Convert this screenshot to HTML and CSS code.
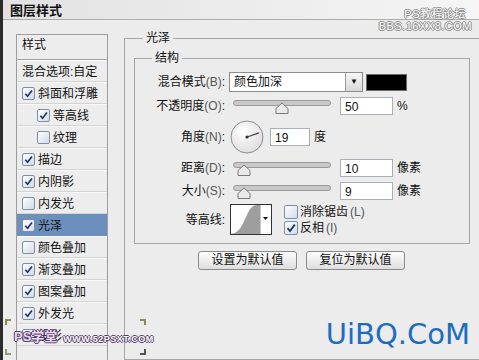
FILE: index.html
```html
<!DOCTYPE html>
<html lang="zh-CN">
<head>
    <meta charset="UTF-8">
    <title>图层样式</title>
    <link rel="stylesheet" href="styles.css">
</head>
<body>
<div class="window">
    <div class="edge"></div>
    <div class="dialog">
        <div class="titlebar">图层样式</div>
        <div class="content">
            <!--左侧样式列表-->
            <div class="styles">
                <div class="styles-head">样式</div>
                <div class="styles-blend">混合选项:自定</div>
                <div class="item"><span class="cb on"><svg viewBox="0 0 12 12"><path d="M2.5 6.2 L5 9 L9.8 2.6" /></svg></span>斜面和浮雕</div>
                <div class="item sub"><span class="cb on"><svg viewBox="0 0 12 12"><path d="M2.5 6.2 L5 9 L9.8 2.6" /></svg></span>等高线</div>
                <div class="item sub"><span class="cb"></span>纹理</div>
                <div class="item"><span class="cb on"><svg viewBox="0 0 12 12"><path d="M2.5 6.2 L5 9 L9.8 2.6" /></svg></span>描边</div>
                <div class="item"><span class="cb on"><svg viewBox="0 0 12 12"><path d="M2.5 6.2 L5 9 L9.8 2.6" /></svg></span>内阴影</div>
                <div class="item"><span class="cb"></span>内发光</div>
                <div class="item current"><span class="cb on"><svg viewBox="0 0 12 12"><path d="M2.5 6.2 L5 9 L9.8 2.6" /></svg></span>光泽</div>
                <div class="item"><span class="cb"></span>颜色叠加</div>
                <div class="item"><span class="cb on"><svg viewBox="0 0 12 12"><path d="M2.5 6.2 L5 9 L9.8 2.6" /></svg></span>渐变叠加</div>
                <div class="item"><span class="cb on"><svg viewBox="0 0 12 12"><path d="M2.5 6.2 L5 9 L9.8 2.6" /></svg></span>图案叠加</div>
                <div class="item"><span class="cb on"><svg viewBox="0 0 12 12"><path d="M2.5 6.2 L5 9 L9.8 2.6" /></svg></span>外发光</div>
                <div class="item"><span class="cb on"><svg viewBox="0 0 12 12"><path d="M2.5 6.2 L5 9 L9.8 2.6" /></svg></span>投影</div>
            </div>

            <!--右侧设置-->
            <div class="main">
                <fieldset class="group outer">
                    <legend>光泽</legend>
                    <fieldset class="group inner">
                        <legend>结构</legend>
                        <div class="form">
                            <div class="label">混合模式<span class="key">(B)</span>:</div>
                            <div class="ctrl">
                                <div class="select"><span class="value">颜色加深</span><span class="arrow">&#9660;</span></div>
                                <div class="swatch"></div>
                            </div>

                            <div class="label">不透明度<span class="key">(O)</span>:</div>
                            <div class="ctrl">
                                <svg class="slider" width="98" height="20" viewBox="0 0 98 20">
                                    <rect x="0.5" y="4.5" width="97" height="5" rx="2.5" fill="#c9c9c9" stroke="#9a9a9a"/>
                                    <path d="M49 7 L55 12.5 L55 17.5 L43 17.5 L43 12.5 Z" fill="#e9e9e9" stroke="#7a7a7a"/>
                                </svg>
                                <div class="field">50</div>
                                <span class="unit">%</span>
                            </div>

                            <div class="label">角度<span class="key">(N)</span>:</div>
                            <div class="ctrl">
                                <svg class="dial" width="34" height="34" viewBox="0 0 34 34">
                                    <defs>
                                        <radialGradient id="dialbg" cx="0.4" cy="0.35" r="0.7">
                                            <stop offset="0" stop-color="#ffffff"/>
                                            <stop offset="1" stop-color="#dcdcdc"/>
                                        </radialGradient>
                                    </defs>
                                    <circle cx="17" cy="17" r="16" fill="url(#dialbg)" stroke="#8c8c8c"/>
                                    <line x1="17" y1="17" x2="29" y2="12.9" stroke="#444" stroke-width="1.2"/>
                                    <circle cx="17" cy="17" r="1.6" fill="#333"/>
                                </svg>
                                <div class="field short">19</div>
                                <span class="unit">度</span>
                            </div>

                            <div class="label">距离<span class="key">(D)</span>:</div>
                            <div class="ctrl">
                                <svg class="slider" width="98" height="20" viewBox="0 0 98 20">
                                    <rect x="0.5" y="4.5" width="97" height="5" rx="2.5" fill="#c9c9c9" stroke="#9a9a9a"/>
                                    <path d="M11 7 L17 12.5 L17 17.5 L5 17.5 L5 12.5 Z" fill="#e9e9e9" stroke="#7a7a7a"/>
                                </svg>
                                <div class="field">10</div>
                                <span class="unit">像素</span>
                            </div>

                            <div class="label">大小<span class="key">(S)</span>:</div>
                            <div class="ctrl">
                                <svg class="slider" width="98" height="20" viewBox="0 0 98 20">
                                    <rect x="0.5" y="4.5" width="97" height="5" rx="2.5" fill="#c9c9c9" stroke="#9a9a9a"/>
                                    <path d="M11 7 L17 12.5 L17 17.5 L5 17.5 L5 12.5 Z" fill="#e9e9e9" stroke="#7a7a7a"/>
                                </svg>
                                <div class="field">9</div>
                                <span class="unit">像素</span>
                            </div>

                            <div class="label">等高线:</div>
                            <div class="ctrl">
                                <svg class="contour" width="42" height="31" viewBox="0 0 42 31">
                                    <rect x="0.5" y="0.5" width="41" height="30" fill="#fff" stroke="#333"/>
                                    <path d="M1 30 C 10 29 13 19 17 11 C 20 4 23 1 27 1 L 30 1 L 30 30 Z" fill="#9e9e9e"/>
                                    <line x1="30.5" y1="1" x2="30.5" y2="30" stroke="#c8c8c8"/>
                                    <path d="M33 13 L38 13 L35.5 16 Z" fill="#111"/>
                                </svg>
                                <div class="checks">
                                    <label class="check"><span class="cb big"></span>消除锯齿<span class="key">(L)</span></label>
                                    <label class="check"><span class="cb big on"><svg viewBox="0 0 12 12"><path d="M2.5 6.2 L5 9 L9.8 2.6" /></svg></span>反相<span class="key">(I)</span></label>
                                </div>
                            </div>
                        </div>
                    </fieldset>
                    <div class="buttons">
                        <div class="btn">设置为默认值</div>
                        <div class="btn">复位为默认值</div>
                    </div>
                </fieldset>
            </div>
        </div>
    </div>

    <!--水印-->
    <div class="mark-top">
        <div>PS教程论坛</div>
        <div>BBS.16XX8.COM</div>
    </div>
    <div class="mark-left">
        <span class="corner tl"></span><span class="corner tr"></span>
        <span class="corner bl"></span><span class="corner br"></span>
        <span class="mark-name">PS学堂</span><span class="mark-url">WWW.52PSXT.COM</span>
    </div>
    <div class="mark-blue">UiBQ.CoM</div>
</div>
</body>
</html>
```

FILE: styles.css
```css
* {
    padding: 0;
    margin: 0;
    box-sizing: border-box;
}

body {
    width: 479px;
    height: 360px;
    overflow: hidden;
    background: #ececec;
    font-family: "Liberation Sans", "Noto Sans CJK SC", sans-serif;
    font-size: 12px;
    line-height: 16px;
    color: #111;
}

.window {
    position: relative;
    width: 479px;
    height: 360px;
    display: flex;
    overflow: hidden;
}

.edge {
    width: 3px;
    background: #2b2b2b;
    flex-shrink: 0;
}

.dialog {
    flex: 1;
    display: flex;
    flex-direction: column;
}

.titlebar {
    height: 23px;
    padding: 3px 0 0 7px;
    font-size: 13px;
    font-weight: bold;
    background: linear-gradient(to right, #e2e2e2, #f6f6f6);
    border-bottom: 1px solid #acacac;
}

.content {
    display: flex;
    align-items: flex-start;
}

/* 样式列表 */
.styles {
    width: 92px;
    height: 340px;
    margin: 14px 0 0 13px;
    border: 1px solid #9c9c9c;
    background: #ededed;
}

.styles-head {
    height: 25px;
    padding: 2px 0 0 5px;
    border-bottom: 1px solid #a4a4a4;
}

.styles-blend {
    height: 22px;
    padding: 3px 0 0 5px;
    border-top: 1px solid #fafafa;
    border-bottom: 1px solid #d4d4d4;
}

.item {
    height: 22px;
    display: flex;
    align-items: center;
    gap: 3px;
    padding: 1px 0 0 5px;
    border-bottom: 1px solid #d4d4d4;
    border-top: 1px solid #f8f8f8;
}

.item.sub {
    padding-left: 20px;
}

.item.current {
    background: #6d8fbd;
    border-color: #6d8fbd;
}

.cb {
    width: 13px;
    height: 13px;
    flex-shrink: 0;
    border: 1px solid #7d8ea8;
    border-radius: 2px;
    background: linear-gradient(135deg, #ffffff, #d2dbe8);
    display: inline-flex;
}

.cb svg {
    width: 11px;
    height: 11px;
}

.cb path {
    fill: none;
    stroke: #1d3666;
    stroke-width: 1.8;
}

.cb.big {
    width: 14px;
    height: 14px;
}

.cb.big svg {
    width: 12px;
    height: 12px;
}

/* 右侧 */
.main {
    margin: 10px 0 0 16px;
}

.group {
    border: 1px solid #a6a6a6;
    min-width: 0;
}

.group legend {
    padding: 0 3px;
    line-height: 16px;
}

.outer {
    width: 372px;
    height: 330px;
}

.outer > legend {
    margin-left: 18px;
}

.inner {
    width: 336px;
    margin: 4px 0 0 9px;
}

.inner > legend {
    margin-left: 17px;
}

.form {
    display: grid;
    grid-template-columns: 90px 1fr;
    grid-template-rows: 20px 20px 34px 19px 19px 31px;
    column-gap: 4px;
    row-gap: 4px;
    padding: 6px 0 8px 0;
}

.label {
    text-align: right;
    align-self: center;
    white-space: nowrap;
}

.key {
    color: #555;
}

.ctrl {
    display: flex;
    align-items: center;
}

.select {
    width: 134px;
    height: 20px;
    display: flex;
    border: 1px solid #8c8c8c;
    background: #fff;
}

.select .value {
    flex: 1;
    padding: 1px 0 0 4px;
}

.select .arrow {
    width: 17px;
    border-left: 1px solid #9a9a9a;
    background: linear-gradient(#f8f8f8, #d8d8d8);
    font-size: 8px;
    text-align: center;
    line-height: 18px;
}

.swatch {
    width: 41px;
    height: 17px;
    margin-left: 3px;
    background: #000;
    border: 1px solid #6a6a6a;
}

.slider {
    margin-left: 4px;
}

.field {
    width: 53px;
    height: 18px;
    margin-left: 9px;
    padding: 1px 0 0 4px;
    background: #fff;
    border: 1px solid #a9b0b8;
}

.field.short {
    width: 40px;
    margin-left: 6px;
}

.unit {
    margin-left: 4px;
}

.dial {
    margin-left: 1px;
}

.contour {
    margin-left: 1px;
    align-self: flex-start;
}

.checks {
    margin-left: 12px;
    display: flex;
    flex-direction: column;
    gap: 1px;
}

.check {
    display: flex;
    align-items: center;
    gap: 2px;
    height: 15px;
}

.buttons {
    display: flex;
    gap: 9px;
    margin: 7px 0 0 73px;
}

.btn {
    width: 99px;
    height: 19px;
    border: 1px solid #8a8a8a;
    border-radius: 3px;
    background: linear-gradient(#fdfdfd, #dedede);
    text-align: center;
    line-height: 17px;
}

/* 水印 */
.mark-top {
    position: absolute;
    top: 8px;
    right: 7px;
    text-align: right;
    font-size: 11px;
    line-height: 12px;
    color: #fff;
    text-shadow: 1px 0 #8a8a8a, -1px 0 #8a8a8a, 0 1px #8a8a8a, 0 -1px #8a8a8a;
    letter-spacing: 0.5px;
}

.mark-top div:first-child {
    padding-right: 6px;
}

.mark-left {
    position: absolute;
    left: 5px;
    top: 319px;
    width: 141px;
    height: 36px;
    display: flex;
    align-items: flex-end;
    white-space: nowrap;
    padding: 0 0 10px 9px;
}

.mark-name {
    flex-shrink: 0;
    font-size: 13px;
    font-weight: bold;
    color: #e8dcf0;
    text-shadow: 1px 0 #5a3c6c, -1px 0 #5a3c6c, 0 1px #5a3c6c, 0 -1px #5a3c6c;
    line-height: 16px;
}

.mark-url {
    flex-shrink: 0;
    margin: 0 0 1px 6px;
    font-size: 9px;
    line-height: 10px;
    font-weight: bold;
    letter-spacing: 0.5px;
    color: #fff;
    text-shadow: 1px 0 #5a3c6c, -1px 0 #5a3c6c, 0 1px #5a3c6c, 0 -1px #5a3c6c;
}

.corner {
    position: absolute;
    width: 6px;
    height: 6px;
    border: 2px solid #8d8a5a;
}

.corner.tl { left: 0; top: 0; border-right: 0; border-bottom: 0; }
.corner.tr { right: 0; top: 0; border-left: 0; border-bottom: 0; }
.corner.bl { left: 0; bottom: 0; border-right: 0; border-top: 0; border-color: #8aa070; }
.corner.br { right: 0; bottom: 0; border-left: 0; border-top: 0; border-color: #555; }

.mark-blue {
    position: absolute;
    right: 9px;
    top: 314px;
    font-family: "DejaVu Sans", sans-serif;
    font-size: 29px;
    line-height: 40px;
    color: #1d6cc3;
}
```
